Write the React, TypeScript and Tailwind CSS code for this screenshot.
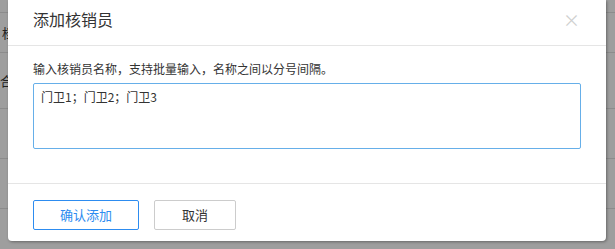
import React from "react";

const font = { fontFamily: '"Microsoft YaHei", "Noto Sans CJK SC", "Liberation Sans", sans-serif' };

const App = () => {
  return (
    <div className="relative w-[615px] h-[249px] overflow-hidden bg-[#9e9e9e]" style={font}>
      {/* page behind the mask */}
      <div className="absolute inset-0">
        <div className="h-[13px] border-b border-[#8c8c8c]" />
        <div className="h-[40px] border-b border-[#8c8c8c] flex items-center pl-[2px] text-[13px] text-[#222]">档</div>
        <div className="h-[56px] border-b border-[#8c8c8c] flex items-center pl-[0px] text-[13px] text-[#222]">合</div>
        <div className="h-[50px] border-b border-[#8c8c8c]" />
        <div className="h-[50px] border-b border-[#8c8c8c]" />
      </div>

      {/* dialog */}
      <div className="absolute left-[8px] top-0 w-[598px] h-[241px] bg-white rounded-b-[4px] shadow-[1px_1px_3px_rgba(0,0,0,0.35)] flex flex-col">
        <div className="h-[46px] border-b border-[#e5e5e5] flex items-center justify-between pl-[25px] pr-[26px]">
          <span className="text-[16px] text-[#333] -mt-[8px]">添加核销员</span>
          <span className="text-[17px] leading-none text-[#d0d0d0] -mt-[6px]">×</span>
        </div>
        <div className="flex-1 px-[25px] pt-[15px] border-b border-[#e5e5e5]">
          <div className="text-[12px] leading-[16px] text-[#333]">输入核销员名称，支持批量输入，名称之间以分号间隔。</div>
          <div className="mt-[6px] h-[66px] border border-[#66afe9] rounded-[2px] px-[7px] py-[4px] text-[12px] leading-[18px] text-[#333]">
            门卫1；门卫2；门卫3
          </div>
        </div>
        <div className="h-[57px] flex items-start gap-[15px] pl-[25px] pt-[16px]">
          <button className="w-[106px] h-[30px] border border-[#2d8cf0] rounded-[2px] text-[13px] text-[#2d8cf0] bg-white">确认添加</button>
          <button className="w-[82px] h-[30px] border border-[#ccc] rounded-[2px] text-[13px] text-[#333] bg-white">取消</button>
        </div>
      </div>
    </div>
  );
};

export default App;
